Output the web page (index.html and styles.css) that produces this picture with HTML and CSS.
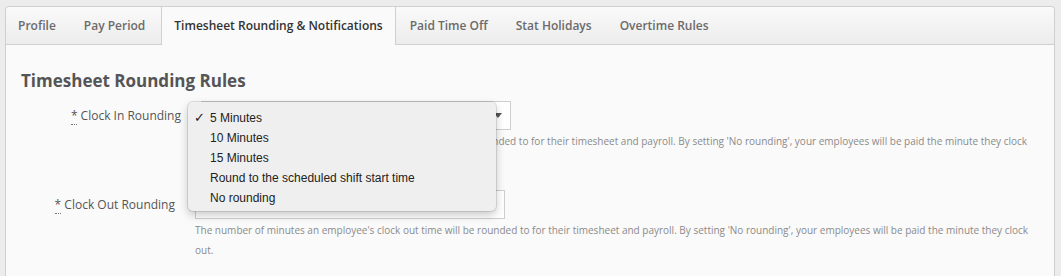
FILE: index.html
```html
<!DOCTYPE html>
<html lang="en">
  <head>
    <meta charset="UTF-8" />
    <title>Timesheet Rounding &amp; Notifications</title>
    <link rel="stylesheet" href="styles.css">
  </head>
  <body>
    <div class="panel">
      <!-- tabs -->
      <ul class="tabs">
        <li class="tab">Profile</li>
        <li class="tab">Pay Period</li>
        <li class="tab active">Timesheet Rounding &amp; Notifications</li>
        <li class="tab">Paid Time Off</li>
        <li class="tab">Stat Holidays</li>
        <li class="tab">Overtime Rules</li>
      </ul>

      <div class="content">
        <h2>Timesheet Rounding Rules</h2>

        <div class="field">
          <label class="field-label"><abbr title="required">*</abbr> Clock In Rounding</label>
          <div class="field-body">
            <div class="select">
              <span class="caret"></span>
            </div>
            <p class="help">The number of minutes an employee's clock in time will be rounded to for their timesheet and payroll. By setting 'No rounding', your employees will be paid the minute they clock in.</p>
          </div>
        </div>

        <div class="field shifted">
          <label class="field-label"><abbr title="required">*</abbr> Clock Out Rounding</label>
          <div class="field-body">
            <div class="select">
              <span class="caret"></span>
            </div>
            <p class="help">The number of minutes an employee's clock out time will be rounded to for their timesheet and payroll. By setting 'No rounding', your employees will be paid the minute they clock out.</p>
          </div>
        </div>

        <!-- open native popup -->
        <ul class="popup">
          <li class="checked">5 Minutes</li>
          <li>10 Minutes</li>
          <li>15 Minutes</li>
          <li>Round to the scheduled shift start time</li>
          <li>No rounding</li>
        </ul>
      </div>
    </div>
  </body>
</html>
```

FILE: styles.css
```css
body {
  margin: 0;
  background: #ececec;
  font-family: "Open Sans", "Liberation Sans", sans-serif;
  color: #555;
  height: 276px;
  overflow: hidden;
}

.panel {
  margin: 6px 6px 0 5px;
  border: 1px solid #cfcfcf;
  border-bottom: none;
  border-radius: 4px 4px 0 0;
  background: #fafafa;
  height: 270px;
}

/* tabs */
.tabs {
  list-style: none;
  margin: 0;
  padding: 0;
  display: flex;
  height: 37px;
  background: linear-gradient(#fafafa, #ececec);
  border-bottom: 1px solid #d0d0d0;
  border-radius: 4px 4px 0 0;
}

.tab {
  padding: 0 14px 0 12px;
  line-height: 37px;
  font-size: 12px;
  font-weight: 600;
  color: #6b6b6b;
  margin-right: 2px;
}

.tab.active {
  background: #fafafa;
  color: #333;
  border-left: 1px solid #d0d0d0;
  border-right: 1px solid #d0d0d0;
  padding: 0 12px;
  height: 38px;
}

/* content */
.content {
  position: relative;
  padding: 24px 15px 0 15px;
}

.content h2 {
  margin: 0 0 8px 0;
  font-size: 17px;
  font-weight: 700;
  color: #555;
  line-height: 24px;
}

.field {
  display: flex;
  gap: 20px;
  margin-bottom: 19px;
}

.field.shifted {
  margin-left: -6px;
}

.field-label {
  width: 160px;
  text-align: right;
  font-size: 12px;
  line-height: 29px;
  color: #555;
  flex-shrink: 0;
}

.field-label abbr {
  text-decoration: none;
  border-bottom: 1px dotted #777;
  color: #555;
}

.field-body {
  flex: 1;
}

.select {
  width: 292px;
  height: 27px;
  border: 1px solid #cfcfcf;
  background: #fff;
  display: flex;
  align-items: center;
  justify-content: flex-end;
  padding: 0 8px;
}

.caret {
  width: 0;
  height: 0;
  border-left: 4px solid transparent;
  border-right: 4px solid transparent;
  border-top: 5px solid #555;
}

.help {
  margin: 1px 0 0 0;
  font-size: 10px;
  line-height: 20px;
  color: #8a8a8a;
  max-width: 840px;
}

/* native popup menu */
.popup {
  position: absolute;
  left: 182px;
  top: 57px;
  width: 308px;
  margin: 0;
  padding: 6px 0 0 0;
  height: 103px;
  list-style: none;
  background: #efefef;
  border-radius: 5px;
  box-shadow: 0 0 0 1px rgba(0, 0, 0, 0.1), 0 4px 10px rgba(0, 0, 0, 0.22);
  font-family: "Liberation Sans", Arial, sans-serif;
  font-size: 12px;
  color: #222;
}

.popup li {
  height: 20px;
  line-height: 20px;
  padding-left: 22px;
  position: relative;
}

.popup li.checked::before {
  content: "\2713";
  position: absolute;
  left: 6px;
  font-family: "DejaVu Sans", sans-serif;
  font-size: 13px;
}
```
